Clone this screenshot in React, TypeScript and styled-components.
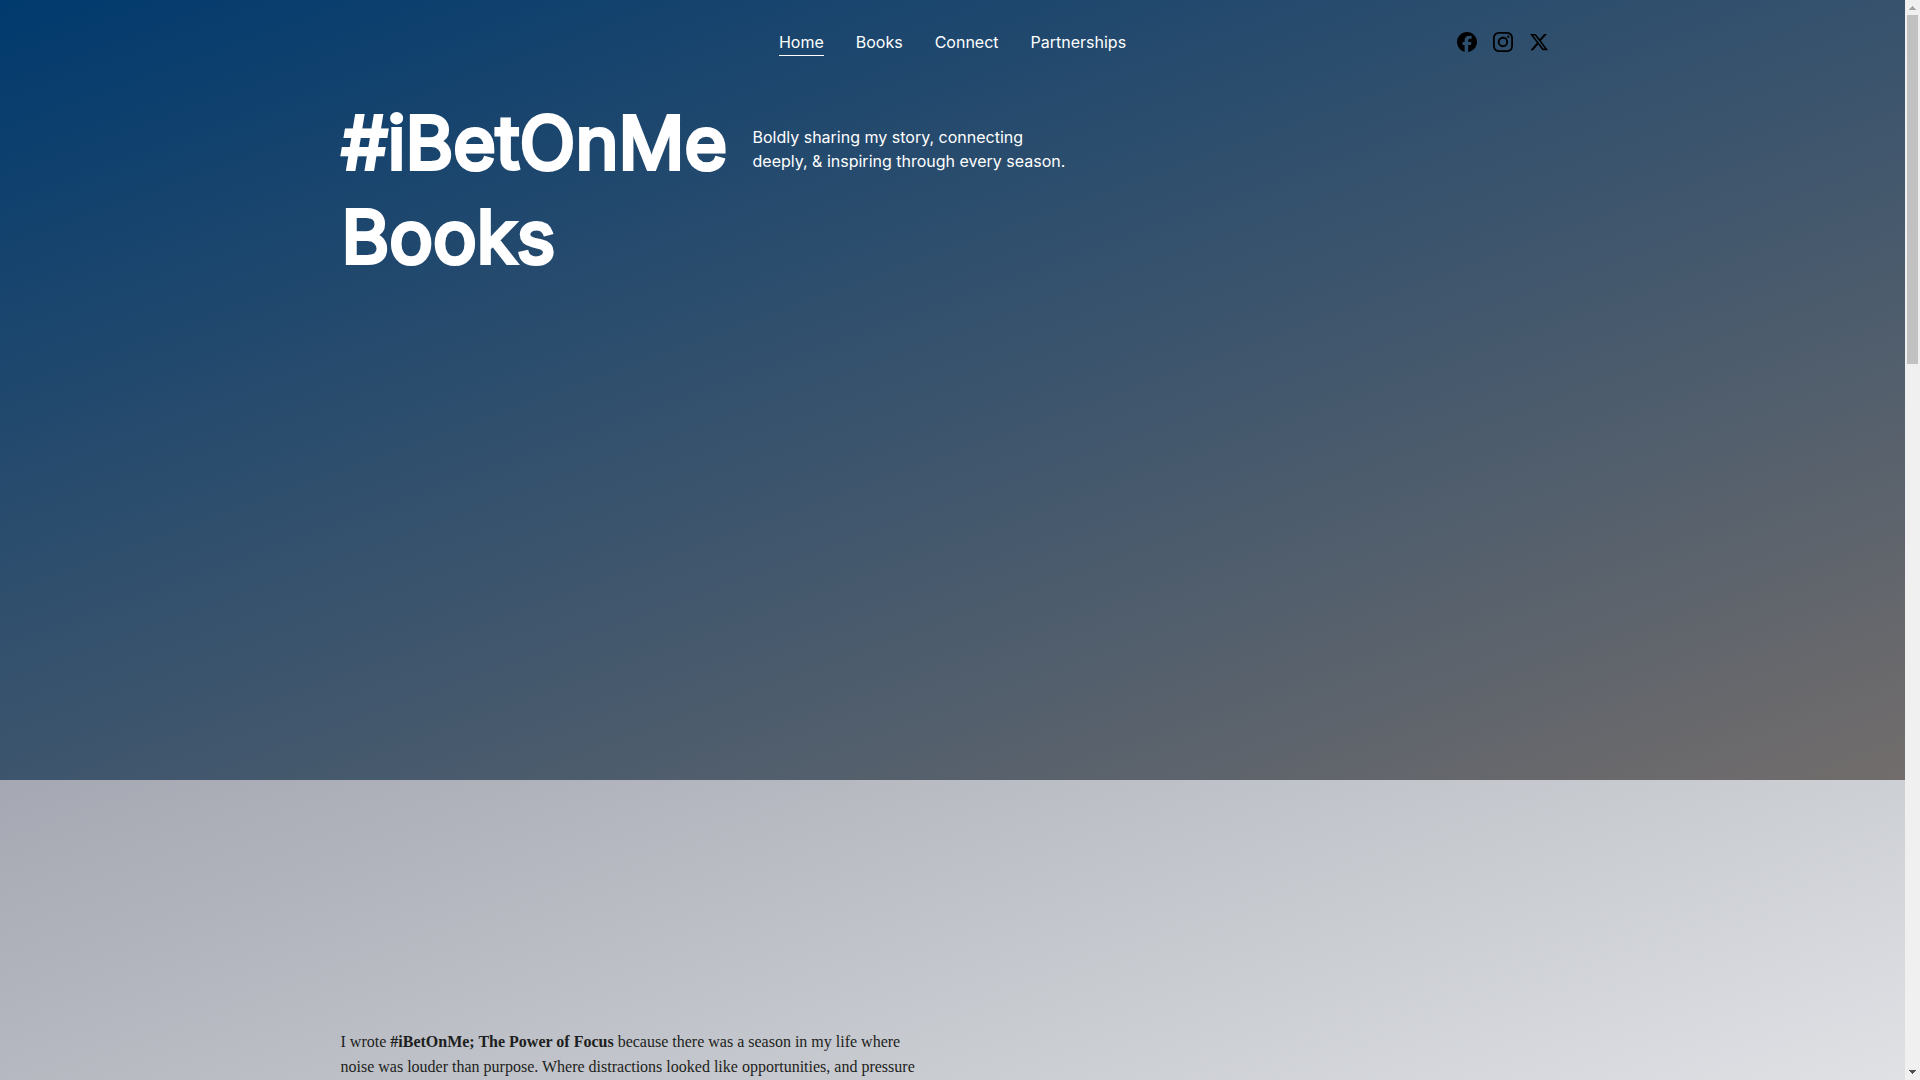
import React from "react";
import styled, { createGlobalStyle } from "styled-components";
import { SiFacebook, SiInstagram } from "react-icons/si";

const GlobalStyle = createGlobalStyle`
  *, *::before, *::after { box-sizing: border-box; }
  html, body { margin: 0; overflow: hidden; }
  h1, p { margin: 0; }
`;

const Frame = styled.div`
  display: flex;
  height: 100vh;
  color: #ffffff;
  font: 400 16px/24px Inter, "Liberation Sans", sans-serif;
`;

const Page = styled.div`
  flex: 1;
  min-width: 0;
  display: flex;
  flex-direction: column;
  overflow: hidden;
`;

const Hero = styled.div`
  flex: none;
  min-height: 780px;
  background: linear-gradient(160deg, #013a6e 0%, #726d6c 100%);
`;

const Container = styled.div`
  width: 100%;
  max-width: 1224px;
  margin: 0 auto;
`;

const HeaderBar = styled(Container)`
  display: grid;
  grid-template-columns: 1fr auto 1fr;
  align-items: center;
  padding: 27px 16px;
`;

const Nav = styled.nav`
  grid-column: 2;
  display: flex;
  gap: 32px;
`;

const NavLink = styled.a<{ $active?: boolean }>`
  color: inherit;
  text-decoration: none;
  line-height: 26px;
  padding-top: 2px;
  border-bottom: 1px solid ${(p) => (p.$active ? "#ffffff" : "transparent")};
`;

const Socials = styled.div`
  justify-self: end;
  display: flex;
  gap: 16px;
`;

const SocialLink = styled.a`
  display: flex;
  color: #000000;

  svg {
    width: 20px;
    height: 20px;
    fill: currentColor;
  }
`;

const Intro = styled(Container)`
  display: flex;
  align-items: flex-start;
  padding-top: 13px;
`;

const Title = styled.h1`
  width: 412px;
  padding-left: 1px;
  font-size: 73px;
  line-height: 94px;
  font-weight: 400;
  font-optical-sizing: none;
  -webkit-text-stroke: 4px currentColor;
`;

const Tagline = styled.p`
  width: 330px;
  padding-top: 29px;
`;

const Story = styled.section`
  flex: 1;
  min-height: 0;
  padding-top: 249px;
  color: #1d1e20;
  background: linear-gradient(160deg, #a5a7b2 0%, #c1c4ca 50%, #dfe1e5 100%);
`;

const StoryText = styled.p`
  max-width: 588px;
  font: 400 16px/25px "Liberation Serif", serif;
`;

const ScrollTrack = styled.div`
  flex: none;
  width: 15px;
  display: flex;
  flex-direction: column;
  align-items: center;
  background: #f0f0f0;
`;

const ScrollArrow = styled.svg<{ $color: string }>`
  flex: none;
  width: 15px;
  height: 15px;
  fill: ${(p) => p.$color};
`;

const ScrollThumb = styled.div`
  width: 11px;
  height: 349px;
  margin-bottom: auto;
  background: #c1c1c1;
`;

const links = ["Home", "Books", "Connect", "Partnerships"];

export default function App() {
  return (
    <>
      <GlobalStyle />
      <Frame>
        <Page>
          <Hero>
            <HeaderBar as="header">
              <Nav>
                {links.map((label) => (
                  <NavLink key={label} href="#" $active={label === "Home"}>
                    {label}
                  </NavLink>
                ))}
              </Nav>
              <Socials>
                <SocialLink href="#" aria-label="Facebook">
                  <SiFacebook />
                </SocialLink>
                <SocialLink href="#" aria-label="Instagram">
                  <SiInstagram />
                </SocialLink>
                <SocialLink href="#" aria-label="X">
                  <svg viewBox="0 0 24 24" aria-hidden="true">
                    <path d="M18.244 2.25h3.308l-7.227 8.26 8.502 11.24H16.17l-5.214-6.817L4.99 21.75H1.68l7.73-8.835L1.254 2.25H8.08l4.713 6.231zm-1.161 17.52h1.833L7.084 4.126H5.117z" />
                  </svg>
                </SocialLink>
              </Socials>
            </HeaderBar>
            <Intro>
              <Title>#iBetOnMe Books</Title>
              <Tagline>
                Boldly sharing my story, connecting deeply, &amp; inspiring
                through every season.
              </Tagline>
            </Intro>
          </Hero>
          <Story>
            <Container>
              <StoryText>
                I wrote <strong>#iBetOnMe; The Power of Focus</strong> because
                there was a season in my life where noise was louder than
                purpose. Where distractions looked like opportunities, and
                pressure
              </StoryText>
            </Container>
          </Story>
        </Page>
        <ScrollTrack aria-hidden="true">
          <ScrollArrow viewBox="0 0 15 15" $color="#a3a3a3" shapeRendering="crispEdges">
            <path d="M7 6h1v1h1v1h1v1h1v1H4V9h1V8h1V7h1z" />
          </ScrollArrow>
          <ScrollThumb />
          <ScrollArrow viewBox="0 0 15 15" $color="#505050" shapeRendering="crispEdges">
            <path d="M4 5h7v1h-1v1H9v1H8v1H7V8H6V7H5V6H4z" />
          </ScrollArrow>
        </ScrollTrack>
      </Frame>
    </>
  );
}
